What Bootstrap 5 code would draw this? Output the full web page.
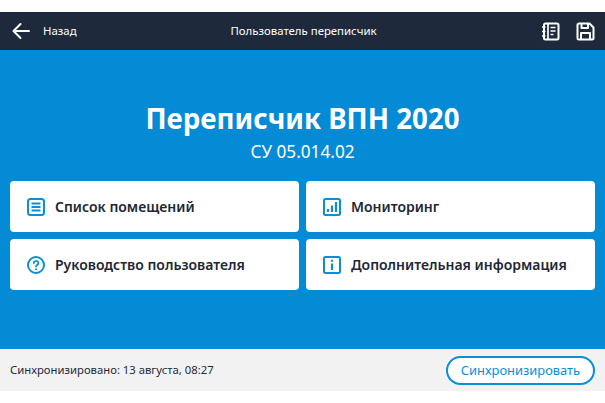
<!DOCTYPE html>
<html lang="ru">
<head>
<meta charset="utf-8">
<title>Переписчик ВПН 2020</title>
<link href="https://cdn.jsdelivr.net/npm/bootstrap@5.3.0/dist/css/bootstrap.min.css" rel="stylesheet">
<style>
html,body{height:403px;overflow:hidden;background:#fff;font-family:"Noto Sans",sans-serif;}
.app-frame{padding:12px 0;height:403px;}
.top-bar{height:38px;background:#1e2a3b;color:#fff;padding:0 10px 0 12px;font-size:11.4px;}
.top-side{width:130px;}
.back-label{margin-left:5px;}
.blue-area{height:299px;background:#058bd6;color:#fff;padding:0 10px;}
.main-title{font-size:27.7px;font-weight:700;line-height:38px;margin:0;padding-top:49px;}
.main-sub{font-size:17.2px;line-height:22px;margin:4px 0 18px;}
.menu-grid{display:grid;grid-template-columns:289px 289px;gap:7px;}
.menu-tile{height:51px;background:#fff;border-radius:4px;color:#1d2735;font-size:14px;font-weight:600;padding-left:17px;gap:10px;text-decoration:none;}
.menu-tile svg{flex:none;}
.foot-bar{height:42px;background:#f3f2f3;padding:0 10px;color:#1f2a3a;font-size:11.3px;}
.sync-btn{width:149px;height:29px;border:2px solid #0a8fd8;border-radius:15px;background:#fff;color:#0a8fd8;font-size:12.9px;line-height:1;padding:0;}
</style>
</head>
<body>
<div class="app-frame d-flex flex-column">
  <nav class="top-bar d-flex align-items-center justify-content-between">
    <div class="top-side d-flex align-items-center gap-2">
      <svg width="18" height="18" viewBox="0 0 18 18" fill="none" stroke="#fff" stroke-width="2" stroke-linecap="round" stroke-linejoin="round"><path d="M1.500 9H17M8.500 2 1.500 9l7 7"/></svg>
      <span class="back-label">Назад</span>
    </div>
    <div>Пользователь переписчик</div>
    <div class="top-side d-flex align-items-center justify-content-end gap-3">
      <svg width="19" height="19" viewBox="0 0 19 19" fill="none" stroke="#fff" stroke-width="2" stroke-linejoin="round"><rect x="3" y="1.500" width="14.500" height="16" rx="1.500"/><path d="M1 5h3.500M1 9.500h3.500M1 14h3.500M7 1.500v16M9.500 5.500h5M9.500 9h5M9.500 12.500h3" stroke-width="1.700"/></svg>
      <svg width="19" height="19" viewBox="0 0 19 19" fill="none" stroke="#fff" stroke-width="2" stroke-linejoin="round"><path d="M3 1.500h10.500l4 4V16a1.500 1.500 0 0 1-1.500 1.500H3A1.500 1.500 0 0 1 1.500 16V3A1.500 1.500 0 0 1 3 1.500Z"/><path d="M5.500 1.500v4.500h6.500V1.500M5 17.500v-6.500h9v6.500"/></svg>
    </div>
  </nav>
  <main class="blue-area text-center">
    <h1 class="main-title">Переписчик ВПН 2020</h1>
    <p class="main-sub">СУ 05.014.02</p>
    <div class="menu-grid text-start">
      <a class="menu-tile d-flex align-items-center" href="#">
        <svg width="18" height="18" viewBox="0 0 18 18" fill="none" stroke="#0a8fd8" stroke-width="2"><rect x="1" y="1" width="16" height="16" rx="2.500"/><path d="M4.500 5.500h9M4.500 9h9M4.500 12.500h9" stroke-width="2"/></svg>
        <span>Список помещений</span>
      </a>
      <a class="menu-tile d-flex align-items-center" href="#">
        <svg width="18" height="18" viewBox="0 0 18 18" fill="none" stroke="#0a8fd8" stroke-width="2"><rect x="1" y="1" width="16" height="16" rx="1.500"/><path d="M5 14v-3M9 14V7.500M13 14V4" stroke-width="2.200"/></svg>
        <span>Мониторинг</span>
      </a>
      <a class="menu-tile d-flex align-items-center" href="#">
        <svg width="18" height="18" viewBox="0 0 18 18" fill="none" stroke="#0a8fd8" stroke-width="2" stroke-linecap="round"><circle cx="9" cy="9" r="8"/><path d="M6.800 7a2.300 2.100 0 1 1 3.400 1.900c-.8.500-1.200.9-1.200 1.500" stroke-width="1.800"/><path d="M9 13.200v.1"/></svg>
        <span>Руководство пользователя</span>
      </a>
      <a class="menu-tile d-flex align-items-center" href="#">
        <svg width="18" height="18" viewBox="0 0 18 18" fill="none" stroke="#0a8fd8" stroke-width="2"><rect x="1" y="1" width="16" height="16" rx="1.500"/><path d="M9 7.500V14M9 3.800v2" stroke-width="2.200"/></svg>
        <span>Дополнительная информация</span>
      </a>
    </div>
  </main>
  <footer class="foot-bar d-flex align-items-center justify-content-between">
    <span>Синхронизировано: 13 августа, 08:27</span>
    <button class="btn sync-btn" type="button">Синхронизировать</button>
  </footer>
</div>
<script src="https://cdn.jsdelivr.net/npm/bootstrap@5.3.0/dist/js/bootstrap.bundle.min.js"></script>
</body>
</html>
